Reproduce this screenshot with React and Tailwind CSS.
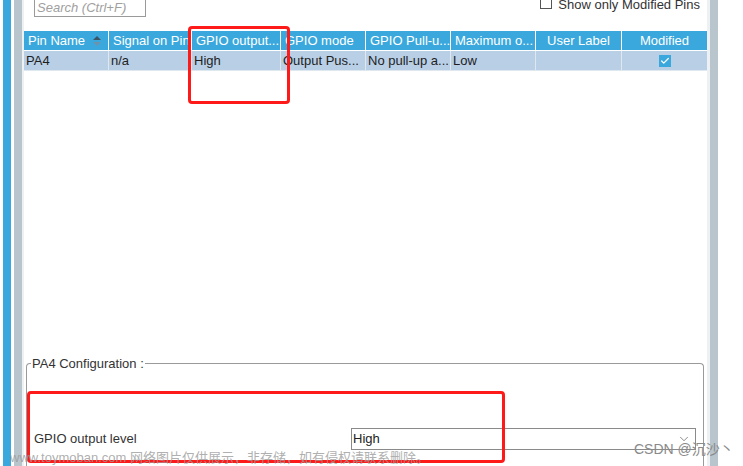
import { Check, ChevronDown } from 'lucide-react';

const cols = [
  { label: 'Pin Name', w: 'w-[84px]', sort: true },
  { label: 'Signal on Pin', w: 'w-[82px]' },
  { label: 'GPIO output...', w: 'w-[88px]' },
  { label: 'GPIO mode', w: 'w-[84px]' },
  { label: 'GPIO Pull-u...', w: 'w-[84px]' },
  { label: 'Maximum o...', w: 'w-[84px]' },
  { label: 'User Label', w: 'w-[85px]', center: true },
  { label: 'Modified', w: 'w-[85px]', center: true },
];

const row = ['PA4', 'n/a', 'High', 'Output Pus...', 'No pull-up a...', 'Low', '', null];

function SortIcon() {
  return (
    <svg width="10" height="12" viewBox="0 0 10 12" className="ml-auto mr-[6px]">
      <path d="M1 5 L5 1 L9 5 Z" fill="#3a5566" />
      <path d="M1 7 L5 11 L9 7 Z" fill="#6b93ad" />
    </svg>
  );
}

function PinTable() {
  return (
    <div className="flex flex-col">
      <div className="flex gap-px h-[20px]">
        {cols.map((c) => (
          <div key={c.label} className={`${c.w} shrink-0 h-[19px] bg-[#3aa8dc] text-white flex items-center ${c.center ? 'justify-center' : 'pl-[4px]'} whitespace-nowrap overflow-hidden`}>
            {c.label}
            {c.sort && <SortIcon />}
          </div>
        ))}
      </div>
      <div className="flex gap-px bg-[#dfe7ef] pb-px">
        {cols.map((c, i) => (
          <div key={c.label} className={`${c.w} shrink-0 h-[19px] bg-[#b8cfe6] text-[#1e1e1e] flex items-center ${c.center ? 'justify-center' : 'pl-[2px]'} whitespace-nowrap overflow-hidden`}>
            {row[i] === null ? (
              <span className="w-[12px] h-[12px] bg-[#3aa8dc] flex items-center justify-center">
                <Check size={10} strokeWidth={3} color="white" />
              </span>
            ) : (
              row[i]
            )}
          </div>
        ))}
      </div>
    </div>
  );
}

export default function App() {
  return (
    <div className="relative w-[743px] h-[466px] overflow-hidden bg-white flex text-[13px] text-[#222]" style={{ fontFamily: '"Liberation Sans", Arial, "Noto Sans CJK SC", sans-serif' }}>
      <div className="w-[8px] ml-[3px] bg-[#3aa8dc] shrink-0" />
      <div className="w-[8px] ml-[3px] bg-[#b9c5cc] shrink-0" />
      <div className="w-[2px] bg-[#eef1f3] shrink-0" />

      <div className="w-[683px] shrink-0 flex flex-col">
        <div className="h-[31px] flex items-start justify-between">
          <div className="ml-[10px] mt-[-4px] w-[112px] h-[21px] border border-[#9a9a9a] flex items-center pl-[2px] pt-[2px] italic text-[#a0a0a0]">
            Search (Ctrl+F)
          </div>
          <div className="flex items-start mr-[7px] mt-[-3px]">
            <span className="w-[12px] h-[12px] border border-[#555] bg-white" />
            <span className="ml-[6px] leading-[15px] text-[#333]">Show only Modified Pins</span>
          </div>
        </div>

        <PinTable />

        <div className="flex-1" />

        <fieldset className="ml-[2px] mr-[3px] h-[112px] border border-b-0 border-[#9a9a9a] rounded-t-[4px] px-0">
          <legend className="ml-[4px] px-[1px] text-[#333] text-[13px]">PA4 Configuration :</legend>
          <div className="flex items-center mt-[54px] pl-[7px]">
            <span className="w-[317px] text-[#333] text-[13px]">GPIO output level</span>
            <div className="w-[345px] h-[22px] border border-[#8a8a8a] flex items-center pl-[1px] text-[#222]">
              High
              <ChevronDown size={14} strokeWidth={1.3} color="#666" className="ml-auto mr-[4px]" />
            </div>
          </div>
        </fieldset>
      </div>

      <div className="w-[3px] bg-[#eef1f3] shrink-0" />
      <div className="w-[8px] bg-[#b9c5cc] shrink-0" />

      <div className="absolute left-[188px] top-[26px] w-[102px] h-[78px] border-[3px] border-[#ff1a1a] rounded-[4px]" />
      <div className="absolute left-[27px] top-[391px] w-[478px] h-[72px] border-[3px] border-[#ff1a1a] rounded-[4px]" />

      <div className="absolute left-[10px] top-[448px] text-[13px] text-[#9a9a9a]/80 whitespace-nowrap">
        www.toymoban.com 网络图片仅供展示，非存储，如有侵权请联系删除。
      </div>
      <div className="absolute left-[634px] top-[439px] text-[14px] text-[#8a8a8a] whitespace-nowrap">
        CSDN @沉沙丶
      </div>
    </div>
  );
}
